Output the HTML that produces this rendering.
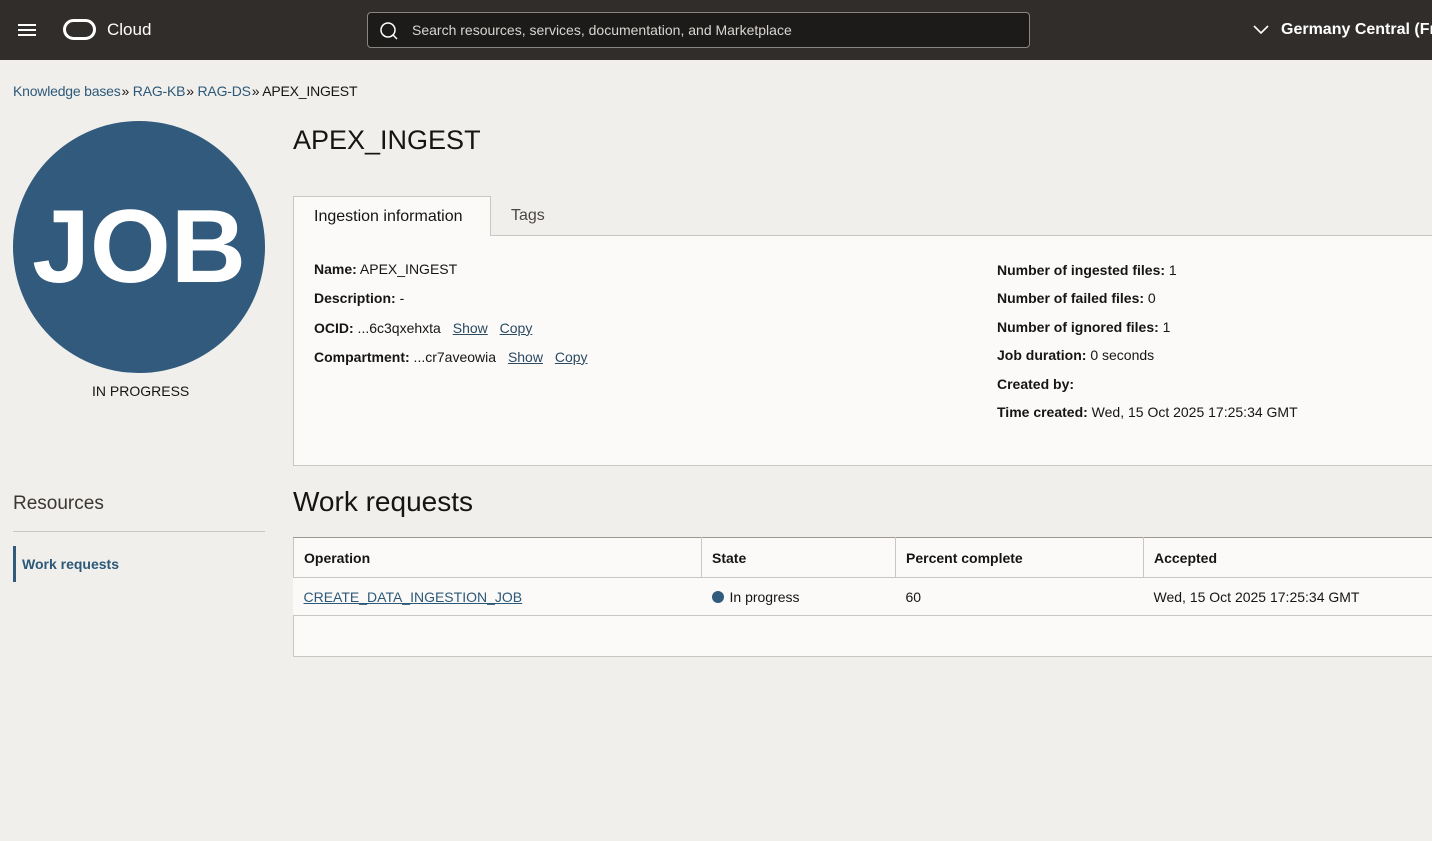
<!DOCTYPE html>
<html><head><style>
*{box-sizing:border-box;margin:0;padding:0}
body{width:1432px;height:841px;overflow:hidden;background:#f1efec;font-family:"Liberation Sans",sans-serif;color:#161513;position:relative}
.top{position:absolute;left:0;top:0;width:1432px;height:60px;background:#312d2a}
.a{position:absolute;white-space:nowrap}
a{color:#2c5977;text-decoration:none}
.u{text-decoration:underline;color:#2c4a60;margin-left:8px}
.panel{position:absolute;left:293px;top:235px;width:1139px;height:231px;background:#fbfaf9;border:1px solid #c9c6c3;border-right:none}
.f{font-size:14px}
.f b{font-weight:bold}
table{position:absolute;left:293px;top:537px;width:1140px;border-collapse:collapse;background:#fbfaf9;font-size:14px}
th{height:40px;text-align:left;padding-left:10px;border:1px solid #c9c6c3;border-top:1px solid #9e9892}
td{height:38px;padding-left:10px;border-bottom:1px solid #c9c6c3}
</style></head><body>
<div class="top">
 <div class="a" style="left:18px;top:24px;width:18px;height:2px;background:#fff;box-shadow:0 5px 0 #fff,0 10px 0 #fff"></div>
 <div class="a" style="left:63px;top:19px;width:33px;height:21px;border:3.5px solid #fff;border-radius:11px"></div>
 <div class="a" style="left:107px;top:20px;color:#fff;font-size:17px">Cloud</div>
 <div class="a" style="left:367px;top:12px;width:663px;height:36px;background:#1d1b19;border:1px solid #8a8580;border-radius:4px"></div>
 <svg class="a" style="left:379px;top:21px" width="20" height="20"><circle cx="9" cy="9" r="7" fill="none" stroke="#fff" stroke-width="1.5"/><line x1="14" y1="14" x2="18" y2="18" stroke="#fff" stroke-width="1.5"/></svg>
 <div class="a" style="left:412px;top:22px;color:#d8d5d2;font-size:14px">Search resources, services, documentation, and Marketplace</div>
 <svg class="a" style="left:1253px;top:24px" width="16" height="12"><path d="M1 2l7 7 7-7" fill="none" stroke="#fff" stroke-width="1.6"/></svg>
 <div class="a" style="left:1281px;top:21px;color:#fff;font-size:16px;font-weight:bold">Germany Central (Frankfurt)</div>
</div>
<div class="a f" style="left:13px;top:83px;letter-spacing:-0.2px"><a>Knowledge bases</a>&#8202;» <a>RAG-KB</a>&#8202;» <a>RAG-DS</a>&#8202;» APEX_INGEST</div>
<div class="a" style="left:13px;top:121px;width:252px;height:252px;border-radius:50%;background:#315a7d;color:#fff;font-size:104px;font-weight:bold;text-align:center;line-height:252px;letter-spacing:0px">JOB</div>
<div class="a f" style="left:92px;top:383px">IN PROGRESS</div>
<div class="a" style="left:293px;top:125px;font-size:27px">APEX_INGEST</div>
<div class="panel"></div>
<div class="a" style="left:293px;top:196px;width:198px;height:40px;background:#fbfaf9;border:1px solid #c9c6c3;border-bottom:none;font-size:16px;padding:11px 0 0 20px">Ingestion information</div>
<div class="a" style="left:511px;top:207px;font-size:16px;color:#4a4743">Tags</div>
<div class="a f" style="left:314px;top:255px;line-height:29.3px"><b>Name:</b> APEX_INGEST<br><b>Description:</b> -<br><b>OCID:</b> ...6c3qxehxta <span class="u">Show</span> <span class="u">Copy</span><br><b>Compartment:</b> ...cr7aveowia <span class="u">Show</span> <span class="u">Copy</span></div>
<div class="a f" style="left:997px;top:256px;line-height:28.4px"><b>Number of ingested files:</b> 1<br><b>Number of failed files:</b> 0<br><b>Number of ignored files:</b> 1<br><b>Job duration:</b> 0 seconds<br><b>Created by:</b><br><b>Time created:</b> Wed, 15 Oct 2025 17:25:34 GMT</div>
<div class="a" style="left:13px;top:493px;font-size:19px;color:#3a3632">Resources</div>
<div class="a" style="left:13px;top:531px;width:252px;height:1px;background:#c9c6c3"></div>
<div class="a" style="left:13px;top:546px;width:3px;height:36px;background:#315a7d"></div>
<div class="a f" style="left:22px;top:556px;font-weight:bold;color:#2c5977">Work requests</div>
<div class="a" style="left:293px;top:486px;font-size:28px">Work requests</div>
<table>
<tr><th style="width:408px">Operation</th><th style="width:194px">State</th><th style="width:248px">Percent complete</th><th>Accepted</th></tr>
<tr><td><a style="text-decoration:underline;color:#2c5977">CREATE_DATA_INGESTION_JOB</a></td><td><span style="display:inline-block;width:12px;height:12px;border-radius:50%;background:#315a7d;vertical-align:-1px;margin-right:6px"></span>In progress</td><td>60</td><td>Wed, 15 Oct 2025 17:25:34 GMT</td></tr>
<tr><td colspan="4" style="height:41px;border-left:1px solid #c9c6c3"></td></tr>
</table>
</body></html>
